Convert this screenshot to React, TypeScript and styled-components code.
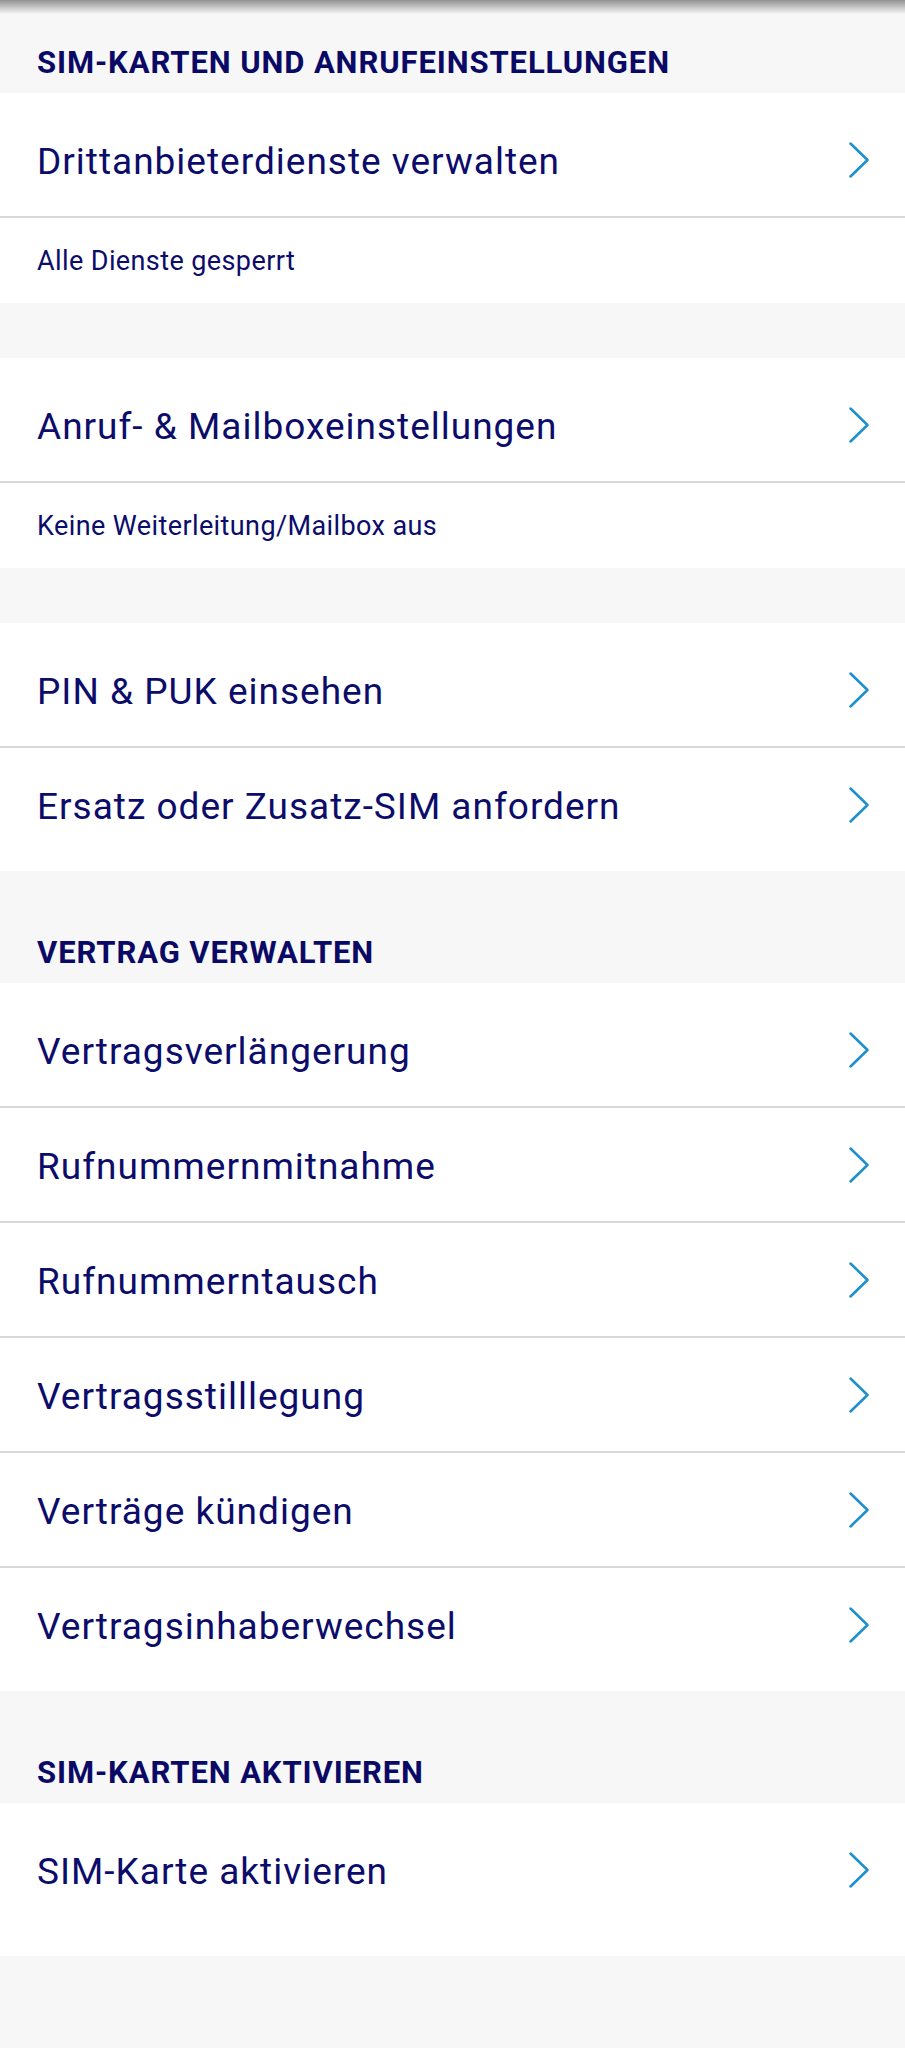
import React from "react";
import styled, { createGlobalStyle } from "styled-components";

const GlobalStyle = createGlobalStyle`
  html, body {
    margin: 0;
    padding: 0;
    background: #f7f7f7;
  }
  body {
    font-family: Roboto, "Noto Sans", "Liberation Sans", sans-serif;
    color: #0c0c6a;
  }
`;

const Page = styled.div`
  width: 905px;
  min-height: 2048px;
  background: #f7f7f7;
  position: relative;
  display: flex;
  flex-direction: column;
`;

const TopShadow = styled.div`
  position: absolute;
  top: 0;
  left: 0;
  right: 0;
  height: 14px;
  background: linear-gradient(to bottom, rgba(120, 120, 120, 0.8), rgba(247, 247, 247, 0));
  pointer-events: none;
`;

const SectionHeader = styled.div<{ $h: number }>`
  height: ${(p) => p.$h}px;
  box-sizing: border-box;
  display: flex;
  align-items: flex-end;
  padding: 0 37px 12px;
  font-size: 31px;
  font-weight: 700;
  letter-spacing: 0.9px;
  color: #0a0a66;
  line-height: 36px;
`;

const Spacer = styled.div`
  height: 55px;
`;

const Group = styled.div<{ $pb?: number }>`
  background: #ffffff;
  padding: 10px 0 ${(p) => p.$pb ?? 10}px;
  display: flex;
  flex-direction: column;
`;

const Row = styled.div`
  height: 115px;
  box-sizing: border-box;
  display: flex;
  align-items: center;
  justify-content: space-between;
  padding: 0 36px 0 37px;
  border-bottom: 2px solid #d5d9dc;
  &:last-child {
    border-bottom: none;
    height: 113px;
  }
`;

const RowLabel = styled.span`
  font-size: 37px;
  font-weight: 400;
  letter-spacing: 1px;
  color: #0c0c6a;
  line-height: 44px;
  padding-top: 4px;
`;

const SubRow = styled.div`
  height: 85px;
  box-sizing: border-box;
  display: flex;
  align-items: center;
  padding: 0 37px;
  font-size: 27px;
  letter-spacing: 0.4px;
  color: #0c0c6a;
`;

const Chevron = () => (
  <svg width="22" height="38" viewBox="0 0 22 38" fill="none" style={{ flexShrink: 0 }}>
    <path d="M3.5 2.5 L20.5 19 L3.5 35.5" stroke="#1c8fcd" strokeWidth="2.5" strokeLinecap="round" strokeLinejoin="round" />
  </svg>
);

const Item = ({ label }: { label: string }) => (
  <Row>
    <RowLabel>{label}</RowLabel>
    <Chevron />
  </Row>
);

export default function App() {
  return (
    <>
      <GlobalStyle />
      <Page>
        <TopShadow />
        <SectionHeader $h={93}>SIM-KARTEN UND ANRUFEINSTELLUNGEN</SectionHeader>
        <Group $pb={0}>
          <Item label="Drittanbieterdienste verwalten" />
          <SubRow>Alle Dienste gesperrt</SubRow>
        </Group>
        <Spacer />
        <Group $pb={0}>
          <Item label="Anruf- & Mailboxeinstellungen" />
          <SubRow>Keine Weiterleitung/Mailbox aus</SubRow>
        </Group>
        <Spacer />
        <Group>
          <Item label="PIN & PUK einsehen" />
          <Item label="Ersatz oder Zusatz-SIM anfordern" />
        </Group>
        <SectionHeader $h={112}>VERTRAG VERWALTEN</SectionHeader>
        <Group>
          <Item label="Vertragsverlängerung" />
          <Item label="Rufnummernmitnahme" />
          <Item label="Rufnummerntausch" />
          <Item label="Vertragsstilllegung" />
          <Item label="Verträge kündigen" />
          <Item label="Vertragsinhaberwechsel" />
        </Group>
        <SectionHeader $h={112}>SIM-KARTEN AKTIVIEREN</SectionHeader>
        <Group $pb={30}>
          <Item label="SIM-Karte aktivieren" />
        </Group>
      </Page>
    </>
  );
}
